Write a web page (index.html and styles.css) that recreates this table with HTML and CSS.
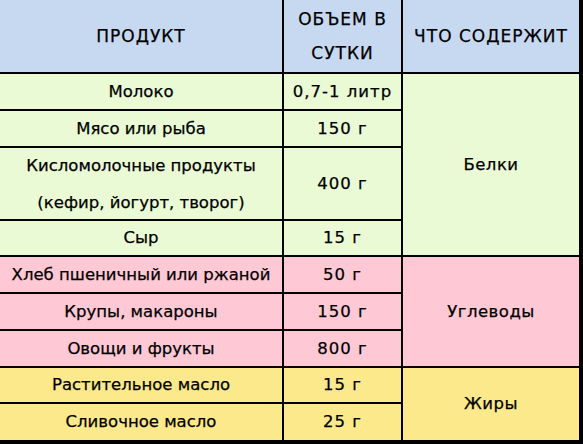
FILE: index.html
```html
<!DOCTYPE html>
<html lang="ru">
<head>
<meta charset="utf-8">
<title>Продукты</title>
<link rel="stylesheet" href="styles.css">
</head>
<body>
<div class="table">
  <div class="cell head">ПРОДУКТ</div>
  <div class="cell head two">ОБЪЕМ В<br>СУТКИ</div>
  <div class="cell head">ЧТО СОДЕРЖИТ</div>

  <div class="cell green">Молоко</div>
  <div class="cell green num">0,7-1 литр</div>
  <div class="cell green span-protein">Белки</div>

  <div class="cell green">Мясо или рыба</div>
  <div class="cell green num">150 г</div>

  <div class="cell green multi">Кисломолочные продукты<br>(кефир, йогурт, творог)</div>
  <div class="cell green num">400 г</div>

  <div class="cell green">Сыр</div>
  <div class="cell green num">15 г</div>

  <div class="cell pink">Хлеб пшеничный или ржаной</div>
  <div class="cell pink num">50 г</div>
  <div class="cell pink span-carb">Углеводы</div>

  <div class="cell pink">Крупы, макароны</div>
  <div class="cell pink num">150 г</div>

  <div class="cell pink">Овощи и фрукты</div>
  <div class="cell pink num">800 г</div>

  <div class="cell yellow">Растительное масло</div>
  <div class="cell yellow num">15 г</div>
  <div class="cell yellow span-fat">Жиры</div>

  <div class="cell yellow">Сливочное масло</div>
  <div class="cell yellow num">25 г</div>
</div>
</body>
</html>
```

FILE: styles.css
```css
html, body {
  margin: 0;
  padding: 0;
  background: #ffffff;
}

.table {
  display: grid;
  grid-template-columns: 282px 117px 176px;
  grid-template-rows: 72px 35px 35px 71px 34px 35px 35px 35px 34px 36px;
  gap: 2px;
  padding: 0 4px 4px 0;
  width: 583px;
  height: 444px;
  box-sizing: border-box;
  background: #000000;
  font-family: "DejaVu Sans", "Noto Sans", sans-serif;
  font-size: 16.5px;
  color: #000000;
  -webkit-text-stroke: 0.25px #000000;
}

.cell {
  display: flex;
  align-items: center;
  justify-content: center;
  text-align: center;
  white-space: nowrap;
  line-height: 36px;
}

.num {
  letter-spacing: 1px;
}

.head {
  background: #c6d9f1;
  font-size: 17px;
  letter-spacing: 1px;
}

.head.two {
  line-height: 34px;
}

.multi {
  line-height: 37px;
}

.green {
  background: #e9fad5;
}

.pink {
  background: #ffc8d5;
}

.yellow {
  background: #fce98b;
}

.span-protein {
  grid-column: 3;
  grid-row: 2 / 6;
  letter-spacing: 0.5px;
}

.span-carb {
  grid-column: 3;
  grid-row: 6 / 9;
  letter-spacing: 0.5px;
}

.span-fat {
  grid-column: 3;
  grid-row: 9 / 11;
  letter-spacing: 0.5px;
}
```
